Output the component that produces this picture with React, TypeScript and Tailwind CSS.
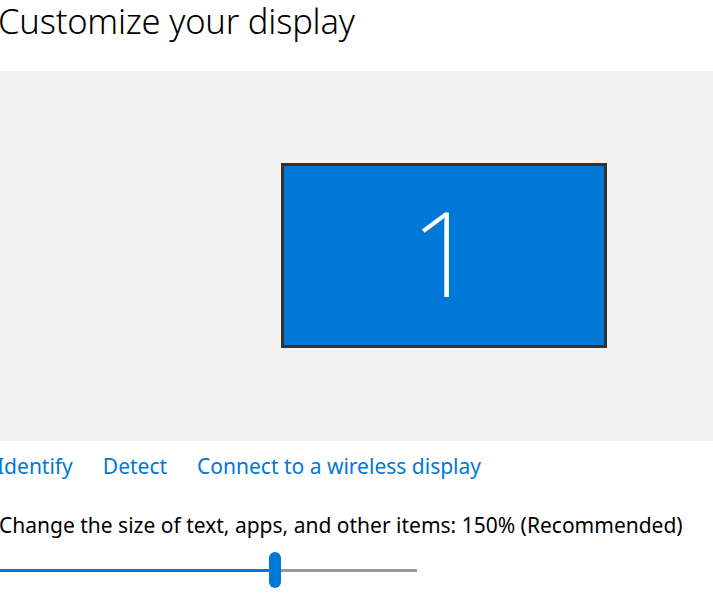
import React from "react";

export default function App() {
  const font = { fontFamily: '"Noto Sans", "Open Sans", "Liberation Sans", sans-serif' };
  return (
    <div className="w-[713px] h-[606px] bg-white overflow-hidden" style={font}>
      <div className="h-[71px] -ml-[2px]">
        <h1 className="text-[34.5px] font-light leading-[42px] text-black tracking-[-0.2px]">Customize your display</h1>
      </div>
      <div className="h-[370px] bg-[#f2f2f2] flex items-center pl-[281px]">
        <div className="-mt-[2px] w-[326px] h-[185px] border-[3px] border-[#333333] bg-[#0078d7] flex items-center justify-center">
          <span className="text-white text-[118px] font-extralight leading-none -mt-[6px]">1</span>
        </div>
      </div>
      <div className="flex gap-[30px] -ml-[3px] mt-[11px] text-[21px] leading-[28px] text-[#0078d7]">
        <span>Identify</span>
        <span>Detect</span>
        <span>Connect to a wireless display</span>
      </div>
      <div className="mt-[31px] -ml-[1px] text-[21px] leading-[28px] text-black">
        Change the size of text, apps, and other items: 150% (Recommended)
      </div>
      <div className="relative mt-[13px] w-[417px] h-[36px] flex items-center">
        <div className="h-[3px] w-[270px] bg-[#0078d7]" />
        <div className="h-[3px] flex-1 bg-[#999999]" />
        <div className="absolute left-[269px] top-0 w-[12px] h-[36px] rounded-full bg-[#0078d7]" />
      </div>
    </div>
  );
}
